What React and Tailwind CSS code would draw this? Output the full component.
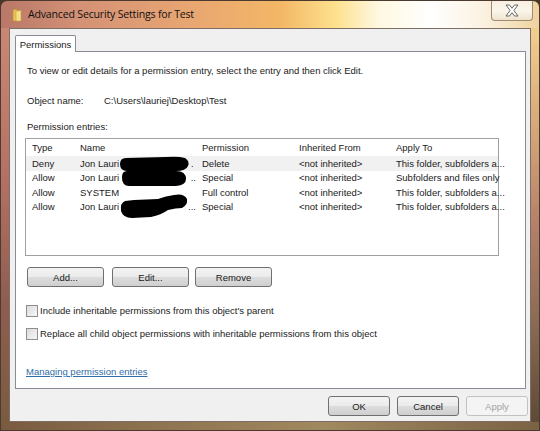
import React from "react";

const rows = [
  { type: "Deny", name: "Jon Lauri (", redact: true, tail: ".", perm: "Delete", inh: "<not inherited>", apply: "This folder, subfolders a...", sel: true },
  { type: "Allow", name: "Jon Lauri (", redact: true, tail: "..", perm: "Special", inh: "<not inherited>", apply: "Subfolders and files only" },
  { type: "Allow", name: "SYSTEM", perm: "Full control", inh: "<not inherited>", apply: "This folder, subfolders a..." },
  { type: "Allow", name: "Jon Lauri (", redact: true, tail: "...", perm: "Special", inh: "<not inherited>", apply: "This folder, subfolders a..." },
];

function Btn({ children, disabled, w = "w-[77px]" }) {
  return (
    <div
      className={`${w} h-[20px] rounded-[3px] border flex items-center justify-center ${
        disabled
          ? "border-[#c2c2c2] bg-[#f4f4f4] text-[#a3a3a3]"
          : "border-[#707070] bg-[linear-gradient(180deg,#f3f3f3_0%,#ebebeb_50%,#dddddd_51%,#cfcfcf_100%)] text-[#1a1a1a]"
      }`}
    >
      {children}
    </div>
  );
}

function Check({ label }) {
  return (
    <div className="flex items-center h-[13px] pl-[10px]">
      <div className="w-[12px] h-[12px] border border-[#8f8f8f] bg-[linear-gradient(135deg,#dcdcdc,#f6f6f6)]" />
      <span className="ml-[2px]">{label}</span>
    </div>
  );
}

export default function App() {
  return (
    <div className="w-[540px] h-[431px] bg-[#4a3626] font-['Liberation_Sans',sans-serif] text-[9.5px] text-[#1a1a1a] leading-[13px]">
      <div className="w-full h-full rounded-t-[7px] border border-[#4b3a30] overflow-hidden flex flex-col">
        {/* Title bar */}
        <div className="h-[27px] flex items-start justify-between bg-[linear-gradient(90deg,#b97868_0%,#d49276_15%,#e8a672_35%,#f3b766_52%,#fde08c_62%,#fff8e0_70%,#ffffff_80%,#fbf1e0_90%,#efd39e_100%)]">
          <div className="flex items-center h-[27px] pl-[11px]">
            <svg width="10" height="14" viewBox="0 0 10 14">
              <path d="M1 2 L5 1 L5 13 L1 13 Z" fill="#e8c45a" stroke="#b8902a" strokeWidth="0.6" />
              <path d="M4 3 L9 2.5 L9 13 L4 13 Z" fill="#f7df85" stroke="#c9a23a" strokeWidth="0.6" />
            </svg>
            <span className="ml-[6px] font-['Open_Sans',sans-serif] text-[10.6px] text-[#111] tracking-[-0.2px]">
              Advanced Security Settings for Test
            </span>
          </div>
          <div className="mr-[6px] w-[42px] h-[20px] rounded-b-[4px] border border-t-0 border-[#a08a70] bg-[linear-gradient(180deg,#f7efe2,#fbf6ea_50%,#efe3cd)] flex items-center justify-center">
            <svg width="16" height="13" viewBox="0 0 16 13">
              <path
                d="M2 1 L5.5 1 L8 4.3 L10.5 1 L14 1 L9.9 6.5 L14 12 L10.5 12 L8 8.7 L5.5 12 L2 12 L6.1 6.5 Z"
                fill="#ffffff"
                stroke="#666"
                strokeWidth="1"
                strokeLinejoin="round"
              />
            </svg>
          </div>
        </div>

        {/* Middle */}
        <div className="flex h-[394px]">
          <div className="w-[8px] bg-[linear-gradient(180deg,#c98774_0%,#b27064_40%,#8f5c50_70%,#7a5c40_100%)]" />
          <div className="w-[522px] border border-[#7d6f68] bg-[#f0f0f0] flex flex-col">
            {/* tab strip */}
            <div className="flex pl-[5px] pt-[6px]">
              <div className="relative z-10 -mb-px h-[17px] w-[61px] border border-b-0 border-[#898c95] bg-white flex items-center justify-center rounded-t-[2px]">
                Permissions
              </div>
            </div>
            {/* panel */}
            <div className="ml-[5px] w-[511px] h-[338px] border border-[#898c95] bg-white flex flex-col">
              <div className="mt-[12px] pl-[11px]">
                To view or edit details for a permission entry, select the entry and then click Edit.
              </div>
              <div className="mt-[17px] pl-[11px] flex">
                <span className="w-[77px]">Object name:</span>
                <span>C:\Users\lauriej\Desktop\Test</span>
              </div>
              <div className="mt-[13px] pl-[11px]">Permission entries:</div>
              {/* list */}
              <div className="relative mt-[5px] ml-[9px] w-[474px] h-[118px] border border-[#a0a0a0] bg-white">
                <div className="grid grid-cols-[48px_122px_97px_97px_1fr] h-[17px] items-center text-[#222]">
                  <span className="pl-[6px]">Type</span>
                  <span className="pl-[6px]">Name</span>
                  <span className="pl-[6px]">Permission</span>
                  <span className="pl-[6px]">Inherited From</span>
                  <span className="pl-[6px]">Apply To</span>
                </div>
                {rows.map((r, i) => (
                  <div
                    key={i}
                    className={`grid grid-cols-[48px_122px_97px_97px_1fr] h-[14.5px] items-center whitespace-nowrap ${
                      r.sel ? "bg-[#f1f1f1]" : ""
                    }`}
                  >
                    <span className="pl-[6px]">{r.type}</span>
                    <span className="pl-[6px] flex">
                      {r.name}
                      {r.redact && <span className="inline-block w-[66px]" />}
                      {r.tail}
                    </span>
                    <span className="pl-[6px]">{r.perm}</span>
                    <span className="pl-[6px]">{r.inh}</span>
                    <span className="pl-[6px]">{r.apply}</span>
                  </div>
                ))}
                <svg className="absolute left-0 top-0" width="472" height="116" viewBox="0 0 472 116">
                  <path d="M100 19 Q94 19 94 25 Q94 32 101 32 L150 32 Q160 32 162 27 Q164 22 159 19 Q152 17 140 18 Z" fill="#000" />
                  <path d="M101 32 Q96 32 96 38 Q96 47 103 47 L150 47 Q160 46 160 40 Q160 32 150 32 Z" fill="#000" />
                  <path d="M99 62 Q94 64 95 72 Q97 79 106 79 L125 78 Q135 76 142 71 Q150 69 156 69 Q162 66 161 60 Q158 54 148 56 Q140 57 132 60 L108 61 Z" fill="#000" />
                </svg>
              </div>
              {/* buttons */}
              <div className="mt-[11px] pl-[11px] flex gap-[8px]">
                <Btn>Add...</Btn>
                <div className="flex gap-[6px]">
                  <Btn>Edit...</Btn>
                  <Btn>Remove</Btn>
                </div>
              </div>
              <div className="mt-[17px]">
                <Check label="Include inheritable permissions from this object's parent" />
              </div>
              <div className="mt-[10px]">
                <Check label="Replace all child object permissions with inheritable permissions from this object" />
              </div>
              <div className="mt-[25px] pl-[10px]">
                <span className="text-[#2f6ea8] underline">Managing permission entries</span>
              </div>
            </div>
            {/* bottom buttons */}
            <div className="mt-[7px] flex justify-end pr-[2px] gap-[7px]">
              <Btn w="w-[62px]">OK</Btn>
              <Btn w="w-[62px]">Cancel</Btn>
              <Btn w="w-[62px]" disabled>
                Apply
              </Btn>
            </div>
          </div>
          <div className="w-[8px] bg-[linear-gradient(180deg,#f2cf8e_0%,#d6a878_25%,#b48068_50%,#8a6a54_75%,#5e4a36_100%)]" />
        </div>
        <div className="h-[8px] bg-[linear-gradient(90deg,#7a5a40,#8e7450_30%,#a08860_60%,#7a6244)]" />
      </div>
    </div>
  );
}
